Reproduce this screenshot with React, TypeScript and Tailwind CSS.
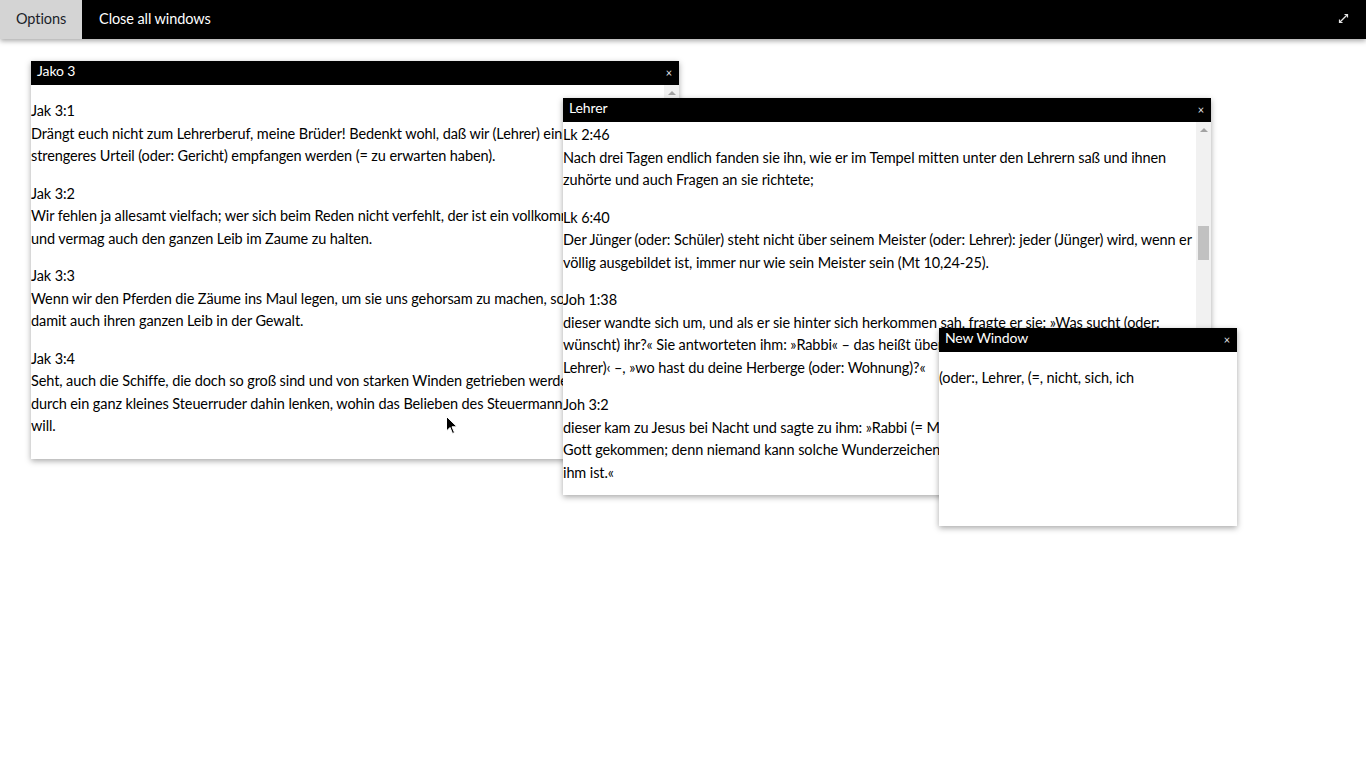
import React from 'react'

type Verse = { ref: string; lines: string[] }

const jakobus: Verse[] = [
  {
    ref: 'Jak 3:1',
    lines: [
      'Drängt euch nicht zum Lehrerberuf, meine Brüder! Bedenkt wohl, daß wir (Lehrer) ein',
      'strengeres Urteil (oder: Gericht) empfangen werden (= zu erwarten haben).',
    ],
  },
  {
    ref: 'Jak 3:2',
    lines: [
      'Wir fehlen ja allesamt vielfach; wer sich beim Reden nicht verfehlt, der ist ein vollkommener Mann',
      'und vermag auch den ganzen Leib im Zaume zu halten.',
    ],
  },
  {
    ref: 'Jak 3:3',
    lines: [
      'Wenn wir den Pferden die Zäume ins Maul legen, um sie uns gehorsam zu machen, so haben wir',
      'damit auch ihren ganzen Leib in der Gewalt.',
    ],
  },
  {
    ref: 'Jak 3:4',
    lines: [
      'Seht, auch die Schiffe, die doch so groß sind und von starken Winden getrieben werden, lassen sich',
      'durch ein ganz kleines Steuerruder dahin lenken, wohin das Belieben des Steuermanns es haben',
      'will.',
    ],
  },
]

const lehrer: Verse[] = [
  {
    ref: 'Lk 2:46',
    lines: [
      'Nach drei Tagen endlich fanden sie ihn, wie er im Tempel mitten unter den Lehrern saß und ihnen',
      'zuhörte und auch Fragen an sie richtete;',
    ],
  },
  {
    ref: 'Lk 6:40',
    lines: [
      'Der Jünger (oder: Schüler) steht nicht über seinem Meister (oder: Lehrer): jeder (Jünger) wird, wenn er',
      'völlig ausgebildet ist, immer nur wie sein Meister sein (Mt 10,24-25).',
    ],
  },
  {
    ref: 'Joh 1:38',
    lines: [
      'dieser wandte sich um, und als er sie hinter sich herkommen sah, fragte er sie: »Was sucht (oder:',
      'wünscht) ihr?« Sie antworteten ihm: »Rabbi« – das heißt übersetzt: ›Meister (oder:',
      'Lehrer)‹ –, »wo hast du deine Herberge (oder: Wohnung)?«',
    ],
  },
  {
    ref: 'Joh 3:2',
    lines: [
      'dieser kam zu Jesus bei Nacht und sagte zu ihm: »Rabbi (= Meister), wir wissen, daß du als Lehrer von',
      'Gott gekommen; denn niemand kann solche Wunderzeichen tun, wie du sie tust, wenn nicht Gott mit',
      'ihm ist.«',
    ],
  },
  {
    ref: 'Joh 3:10',
    lines: ['Jesus antwortete ihm: »Du bist der Lehrer Israels und verstehst das nicht?'],
  },
]

function VerseList({ verses }: { verses: Verse[] }) {
  return (
    <>
      {verses.map((v) => (
        <div key={v.ref} className="mb-[15px]">
          <div className="whitespace-nowrap">{v.ref}</div>
          {v.lines.map((l, i) => (
            <div key={i} className="whitespace-nowrap">
              {l}
            </div>
          ))}
        </div>
      ))}
    </>
  )
}

function TitleBar({ title }: { title: string }) {
  return (
    <div className="flex h-[24px] shrink-0 items-center justify-between bg-black pb-[3px] pl-[6px] pr-[7px] text-[14px] text-white">
      <span>{title}</span>
      <span className="pt-[3px] text-[11px] text-gray-200">×</span>
    </div>
  )
}

function FakeScrollbar({ thumb }: { thumb?: boolean }) {
  return (
    <div className="flex w-[15px] shrink-0 flex-col items-center bg-[#f1f1f1]">
      <div className="mt-[6px] h-0 w-0 border-x-[4px] border-b-[4px] border-x-transparent border-b-[#a3a3a3]" />
      {thumb && <div className="mt-[94px] h-[34px] w-[11px] bg-[#c1c1c1]" />}
    </div>
  )
}

export default function App() {
  return (
    <div className="relative h-[768px] w-full overflow-hidden bg-white font-[Lato,'Open_Sans',sans-serif] text-[14.5px] leading-[22.5px] tracking-[-0.1px] text-black">
      {/* top menu bar */}
      <div className="relative z-50 flex h-[39px] items-stretch bg-black shadow-[0_2px_5px_rgba(0,0,0,0.35)]">
        <button className="bg-[#d4d4d4] px-[16px] pb-[1px] text-[#1b1f2a]">Options</button>
        <button className="pl-[17px] pr-[16px] pb-[1px] text-white">Close all windows</button>
        <div className="ml-auto flex items-center pr-[17px] pb-[3px]">
          <svg width="11" height="11" viewBox="0 0 11 11" fill="none" stroke="#e5e5e5" strokeWidth="1.2">
            <path d="M1.5 9.5 L9.5 1.5" />
            <path d="M6.5 1.5 H9.5 V4.5" />
            <path d="M1.5 6.5 V9.5 H4.5" />
          </svg>
        </div>
      </div>

      {/* window: Jako 3 */}
      <div className="absolute left-[31px] top-[61px] z-10 flex h-[398px] w-[648px] flex-col bg-white shadow-[0_2px_6px_rgba(0,0,0,0.35)]">
        <TitleBar title="Jako 3" />
        <div className="flex min-h-0 flex-1">
          <div className="flex-1 overflow-hidden pt-[15px]">
            <VerseList verses={jakobus} />
          </div>
          <FakeScrollbar />
        </div>
      </div>

      {/* window: Lehrer */}
      <div className="absolute left-[563px] top-[98px] z-20 flex h-[397px] w-[648px] flex-col bg-white shadow-[0_2px_6px_rgba(0,0,0,0.35)]">
        <TitleBar title="Lehrer" />
        <div className="flex min-h-0 flex-1">
          <div className="flex-1 overflow-hidden pt-[2px]">
            <VerseList verses={lehrer} />
          </div>
          <FakeScrollbar thumb />
        </div>
      </div>

      {/* window: New Window */}
      <div className="absolute left-[939px] top-[328px] z-30 flex h-[198px] w-[298px] flex-col bg-white shadow-[0_2px_6px_rgba(0,0,0,0.35)]">
        <TitleBar title="New Window" />
        <div className="flex-1 overflow-hidden pt-[15px]">
          <p className="whitespace-nowrap">(oder:, Lehrer, (=, nicht, sich, ich</p>
        </div>
      </div>

      {/* mouse pointer */}
      <svg className="absolute left-[446px] top-[416px] z-40" width="12" height="19" viewBox="0 0 12 19">
        <path d="M0.5 0.5 L0.5 15 L4 11.5 L6.5 17.5 L8.5 16.6 L6 10.8 L11 10.8 Z" fill="#000" stroke="#fff" strokeWidth="1" />
      </svg>
    </div>
  )
}
